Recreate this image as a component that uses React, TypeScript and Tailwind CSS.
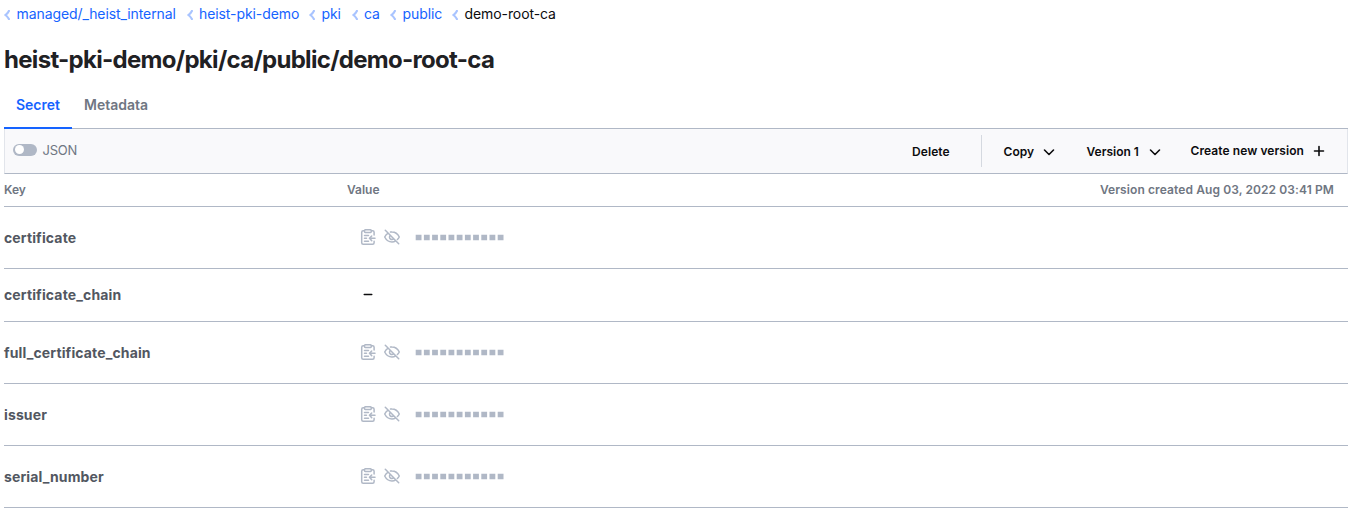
import React from "react";

const crumbs = [
  { label: "managed/_heist_internal", cls: "w-[182.500px]" },
  { label: "heist-pki-demo", cls: "w-[122.5px]" },
  { label: "pki", cls: "w-[42.5px]" },
  { label: "ca", cls: "w-[38.5px]" },
  { label: "public", cls: "w-[62px]" },
];

const rows = [
  { name: "certificate", masked: true },
  { name: "certificate_chain", masked: false },
  { name: "full_certificate_chain", masked: true },
  { name: "issuer", masked: true },
  { name: "serial_number", masked: true },
];

function CrumbArrow() {
  return (
    <svg className="mt-px mr-[6.500px] h-[10px] w-[6px] shrink-0" viewBox="0 0 6 10" fill="none" stroke="#a9c4ff" strokeWidth="2.1">
      <path d="M5.300 .1C4.500 2.200 3.200 3.700 1.500 5c1.700 1.300 3 2.800 3.800 4.900" />
    </svg>
  );
}

function ChevronDown() {
  return (
    <svg className="h-4 w-4 shrink-0" viewBox="0 0 16 16" fill="none" stroke="#0c0c0e" strokeWidth="1.6" strokeLinecap="round" strokeLinejoin="round">
      <path d="M3.500 6l4.500 4.500L12.500 6" />
    </svg>
  );
}

function Plus() {
  return (
    <svg className="h-4 w-4 shrink-0" viewBox="0 0 16 16" fill="none" stroke="#0c0c0e" strokeWidth="1.6" strokeLinecap="round">
      <path d="M8 3.500v9M3.500 8h9" />
    </svg>
  );
}

function ClipboardCopy() {
  return (
    <svg className="h-4 w-4 shrink-0" viewBox="0 0 16 16" fill="none" stroke="#b0b8c6" strokeWidth="1.5" strokeLinecap="round" strokeLinejoin="round">
      <path d="M4.500 1.800H3.200a1.500 1.500 0 0 0-1.500 1.500v10.400a1.500 1.500 0 0 0 1.500 1.500h9.400a1.500 1.500 0 0 0 1.500-1.500v-1.400M11.300 1.800h1.300a1.500 1.500 0 0 1 1.500 1.500v2.600" />
      <rect x="4.500" y=".8" width="6.800" height="2.600" rx=".8" />
      <path d="M4.500 6.500h4M4.500 9.300h2M4.500 12.200h4M15 9.300H9.500M11.700 7L9.400 9.300l2.300 2.300" />
    </svg>
  );
}

function EyeOff() {
  return (
    <svg className="h-4 w-4 shrink-0" viewBox="0 0 16 16" fill="none" stroke="#b0b8c6" strokeWidth="1.5" strokeLinecap="round" strokeLinejoin="round">
      <path d="M1.300 1.300l13.400 13.400M6.500 3.100A7 7 0 0 1 8 3c4.800 0 7.300 5 7.300 5a12 12 0 0 1-1.900 2.500M4.200 4.200C1.900 5.500.7 8 .7 8s2.500 5 7.300 5a7.300 7.300 0 0 0 3.700-1.100M6.200 6.400a2.400 2.400 0 0 0 3.500 3.400" />
    </svg>
  );
}

function Mask() {
  return (
    <svg className="ml-[15px] h-[6px] w-[90px] shrink-0 translate-y-[0.500px]" viewBox="0 0 90 6" fill="#b0b8c6">
      {Array.from({ length: 11 }, (_, i) => (
        <rect key={i} x={0.700 + i * 8.200} y="0" width="5.800" height="6" />
      ))}
    </svg>
  );
}

export default function App() {
  return (
    <main className="h-[516px] w-[1355px] overflow-hidden bg-white pr-[7px] pl-1 font-['Inter',sans-serif] text-[#0c0c0e]">
      <nav className="flex h-7 items-center text-[14px] leading-5 tracking-[-0.090px] whitespace-nowrap">
        {crumbs.map((c) => (
          <a key={c.label} className={`flex shrink-0 items-center text-[#1563ff] ${c.cls}`}>
            <CrumbArrow />
            {c.label}
          </a>
        ))}
        <span className="flex items-center">
          <CrumbArrow />
          demo-root-ca
        </span>
      </nav>

      <h1 className="flex h-16 items-center text-[24px] leading-8 font-bold tracking-[-0.700px] whitespace-nowrap text-[#1f2124]">
        heist-pki-demo/pki/ca/public/demo-root-ca
      </h1>

      <div className="flex h-[37px] border-b border-[#b0b8c6] text-[14px] font-semibold">
        <a className="mb-[-1px] flex h-[37px] w-[68px] justify-center border-b-2 border-[#1563ff] pt-[3px] leading-5 text-[#1563ff]">Secret</a>
        <a className="px-3 pt-[3px] leading-5 text-[#6f7682]">Metadata</a>
      </div>

      <div className="flex h-[45px] items-center border-x border-b border-x-[#e2e5eb] border-b-[#b0b8c6] bg-[#f9f9fb] text-[12px] font-semibold whitespace-nowrap">
        <div className="ml-2 flex items-center text-[13px] font-normal text-[#6f7682]">
          <span className="mb-[2px] flex h-3 w-6 items-center rounded-full bg-[#b0b8c6] pl-[2px]">
            <span className="mb-px h-[9px] w-[9px] rounded-full bg-white" />
          </span>
          <span className="ml-[5.500px] tracking-[-0.200px]">JSON</span>
        </div>
        <button className="ml-auto w-[69px] pt-[2px] text-left tracking-[0.080px]">Delete</button>
        <div className="mb-px h-8 w-[22.500px] border-l border-[#d5d9e0]" />
        <button className="flex w-[83px] items-center pt-[2px]">
          <span className="w-[37.500px] text-left tracking-[0.050px]">Copy</span>
          <ChevronDown />
        </button>
        <button className="flex w-[104px] items-center pt-[2px]">
          <span className="w-[60.500px] text-left">Version 1</span>
          <ChevronDown />
        </button>
        <button className="flex w-[156.500px] items-center">
          <span className="w-[120.500px] text-left tracking-[0.080px]">Create new version</span>
          <Plus />
        </button>
      </div>

      <div className="flex h-[33px] items-center border-b border-[#b0b8c6] text-[12px] font-semibold text-[#6f7682]">
        <span className="w-[343px]">Key</span>
        <span>Value</span>
        <span className="mr-[14px] ml-auto tracking-[0.100px]">Version created Aug 03, 2022 03:41 PM</span>
      </div>

      {rows.map((r) => (
        <div key={r.name} className={`flex items-center border-b border-[#b0b8c6] pb-[2px] ${r.masked ? "h-[62px]" : "h-[53px]"}`}>
          <span className="w-[356px] pt-[2px] text-[14px] leading-5 font-bold tracking-[0.130px] text-[#525761]">{r.name}</span>
          {r.masked ? (
            <div className="flex items-center">
              <ClipboardCopy />
              <span className="w-2" />
              <EyeOff />
              <Mask />
            </div>
          ) : (
            <svg className="h-4 w-4" viewBox="0 0 16 16" fill="none" stroke="#0c0c0e" strokeWidth="1.5" strokeLinecap="round">
              <path d="M4.250 8.500h7.500" />
            </svg>
          )}
        </div>
      ))}
    </main>
  );
}
